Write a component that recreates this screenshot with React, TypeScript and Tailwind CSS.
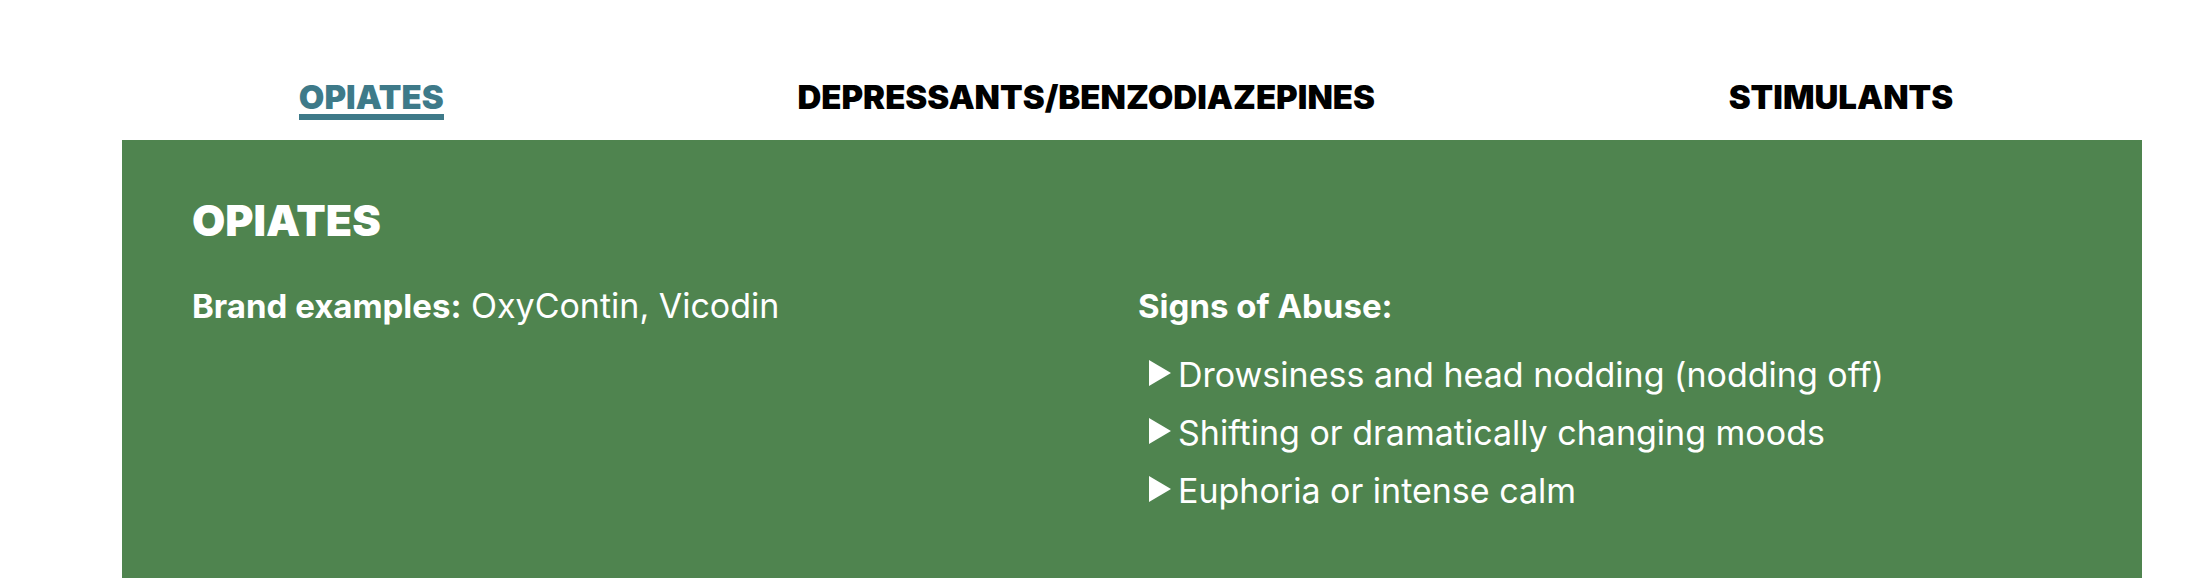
import { useState } from "react";

const tabs = ["Opiates", "Depressants/Benzodiazepines", "Stimulants"];

const signs = [
  "Drowsiness and head nodding (nodding off)",
  "Shifting or dramatically changing moods",
  "Euphoria or intense calm",
];

function Bullet() {
  return (
    <svg width="22" height="30" viewBox="0 0 22 30" fill="currentColor" className="shrink-0" aria-hidden="true">
      <path d="M0 0 L22 13 L0 26 Z" />
    </svg>
  );
}

export default function App() {
  const [active, setActive] = useState(0);

  return (
    <main className="flex min-h-screen flex-col bg-white pl-[122px] pr-[68px] font-['Inter',sans-serif] text-[34px] leading-9">
      <div role="tablist" className="flex justify-around pt-20 pb-5 pr-3 text-[33px] leading-[34px]">
        {tabs.map((tab, i) => (
          <button
            key={tab}
            id={`tab-${i}`}
            type="button"
            role="tab"
            aria-selected={i === active}
            aria-controls="panel"
            onClick={() => setActive(i)}
            className={
              i === active
                ? "cursor-pointer border-b-6 border-[#3e7a89] font-black text-[#3e7a89] uppercase"
                : "cursor-pointer border-b-6 border-transparent font-black text-black uppercase"
            }
          >
            {tab}
          </button>
        ))}
      </div>
      <section
        id="panel"
        role="tabpanel"
        aria-labelledby={`tab-${active}`}
        className="grow bg-[#4f844f] px-[70px] pt-14 pb-14 text-white"
      >
        <h2 className="mb-11 text-[43px] leading-12 font-black uppercase">Opiates</h2>
        <div className="grid grid-cols-2 gap-3">
          <p>
            <strong className="text-[33px] font-bold">Brand examples:</strong> OxyContin, Vicodin
          </p>
          <div>
            <h3 className="text-[33px] leading-9 font-bold">Signs of Abuse:</h3>
            <ul className="mt-[33px] flex flex-col gap-[22px] pl-[11px]">
              {signs.map((sign) => (
                <li key={sign} className="flex items-center gap-[7px]">
                  <Bullet />
                  {sign}
                </li>
              ))}
            </ul>
          </div>
        </div>
      </section>
    </main>
  );
}
